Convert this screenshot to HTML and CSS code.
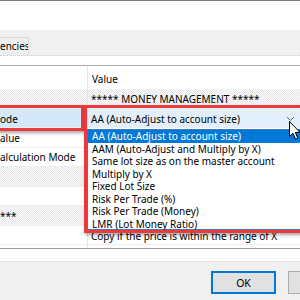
FILE: index.html
```html
<!DOCTYPE html>
<html>
<head>
<meta charset="utf-8">
<link rel="stylesheet" href="styles.css">
</head>
<body>
<div class="dialog">
  <div class="topband"></div>
  <div class="tabstrip"><div class="tab">encies</div></div>
  <div class="gapband"></div>
  <div class="grid">
    <div class="row header"><div class="name"></div><div class="value">Value</div></div>
    <div class="row cat h20"><div class="name"></div><div class="value">***** MONEY MANAGEMENT *****</div></div>
    <div class="row sel h19"><div class="name">ode</div><div class="value combo"><span>AA (Auto-Adjust to account size)</span><svg class="chev" width="9" height="6" viewBox="0 0 9 6"><polyline points="1,1 4.5,4.5 8,1" fill="none" stroke="#6d6d6d" stroke-width="1"/></svg></div></div>
    <div class="row h20"><div class="name">alue</div><div class="value"></div></div>
    <div class="row h19"><div class="name">alculation Mode</div><div class="value"></div></div>
    <div class="row cat h20"><div class="name"></div><div class="value"></div></div>
    <div class="row h19"><div class="name"></div><div class="value"></div></div>
    <div class="row cat h20"><div class="name">***</div><div class="value"></div></div>
    <div class="row h19"><div class="name"></div><div class="value copy">Copy if the price is within the range of X</div></div>
    <div class="row tail"><div class="name"></div><div class="value"></div></div>
  </div>
  <div class="whiteband"></div>
  <div class="footer">
    <div class="btn default">OK</div>
    <div class="btn"></div>
  </div>
</div>

<ul class="droplist">
  <li class="picked">AA (Auto-Adjust to account size)</li>
  <li>AAM (Auto-Adjust and Multiply by X)</li>
  <li>Same lot size as on the master account</li>
  <li>Multiply by X</li>
  <li>Fixed Lot Size</li>
  <li>Risk Per Trade (%)</li>
  <li>Risk Per Trade (Money)</li>
  <li>LMR (Lot Money Ratio)</li>
</ul>

<div class="mark mark-left"></div>
<div class="mark mark-right"></div>

<svg class="cursor" width="13" height="20" viewBox="0 0 13 20">
  <path d="M0.5,0.5 L0.5,15.5 L4,12.2 L6.6,18.2 L8.8,17.2 L6.3,11.4 L11,11.4 Z" fill="#ffffff" stroke="#000000" stroke-width="1" stroke-linejoin="miter"/>
</svg>
</body>
</html>
```

FILE: styles.css
```css
html, body {
  margin: 0;
  padding: 0;
}
body {
  width: 300px;
  height: 300px;
  overflow: hidden;
  position: relative;
  background: #f0f0f0;
  font-family: "Noto Sans", "Open Sans", sans-serif;
  font-size: 10px;
  color: #000;
}
.dialog {
  width: 300px;
  display: flex;
  flex-direction: column;
}
.topband {
  height: 29px;
  border-top: 1px solid #7c7c7c;
  background: #ffffff;
}
.tabstrip {
  height: 25px;
  background: #f0f0f0;
  border-bottom: 1px dotted #cfcfcf;
  display: flex;
  align-items: flex-end;
}
.tab {
  width: 28px;
  height: 17px;
  border-top: 1px solid #d9d9d9;
  border-right: 1px solid #d9d9d9;
  background: #f0f0f0;
  line-height: 17px;
  white-space: nowrap;
  overflow: hidden;
}
.gapband {
  height: 9px;
  background: #ffffff;
}
.grid {
  border-top: 1px solid #a9a9a9;
  border-bottom: 1px solid #a0a0a0;
  background: #ffffff;
  display: flex;
  flex-direction: column;
}
.row {
  display: grid;
  grid-template-columns: 88px 1fr;
  box-sizing: border-box;
  border-bottom: 1px solid #ededed;
  white-space: nowrap;
}
.row .name {
  border-right: 1px solid #e6e6e6;
  overflow: hidden;
  display: flex;
  align-items: center;
  padding-left: 0;
}
.row .value {
  display: flex;
  align-items: center;
  padding-left: 3px;
  overflow: hidden;
}
.header {
  height: 23px;
  border-bottom: none;
}
.header .value {
  padding-left: 4px;
  padding-top: 2px;
}
.h20 { height: 20px; }
.h19 { height: 19px; }
.tail { height: 3px; border-bottom: none; }
.cat .name,
.cat .value {
  background-color: #f3f3f3;
  background-image: repeating-conic-gradient(#e9e9e9 0 25%, #f9f9f9 0 50%);
  background-size: 2px 2px;
}
.sel .name {
  background: #d5e8f9;
  padding-top: 2px;
}
.combo {
  background: #e2eefa;
  justify-content: space-between;
  padding-top: 2px;
}
.copy {
  padding-top: 1px;
}
.chev {
  margin-right: 5px;
  flex-shrink: 0;
}
.whiteband {
  height: 12px;
  background: #ffffff;
  border-bottom: 1px solid #dedede;
}
.footer {
  display: flex;
  gap: 12px;
  padding: 9px 0 0 211px;
}
.btn {
  flex-shrink: 0;
  width: 75px;
  height: 23px;
  box-sizing: border-box;
  border: 1px solid #adadad;
  background: #e1e1e1;
  display: flex;
  align-items: center;
  justify-content: center;
  font-size: 10.5px;
}
.btn.default {
  width: 65px;
  border: 1px solid #0078d7;
  box-shadow: inset 0 0 0 1px #0078d7;
}
.droplist {
  position: absolute;
  left: 87px;
  top: 129px;
  width: 220px;
  height: 101px;
  box-sizing: border-box;
  margin: 0;
  padding: 0;
  list-style: none;
  background: #ffffff;
  border: 1px solid #3d7ab8;
}
.droplist li {
  height: 12.5px;
  line-height: 12.5px;
  padding-left: 4px;
  white-space: nowrap;
}
.droplist li.picked {
  background: #0078d7;
  color: #ffffff;
}
.mark {
  position: absolute;
  box-sizing: border-box;
  border: 3px solid #ea3a3d;
  box-shadow: 1px 2px 3px rgba(0, 0, 0, 0.35);
}
.mark-left {
  left: -4px;
  top: 105px;
  width: 88px;
  height: 26px;
}
.mark-right {
  left: 84px;
  top: 105px;
  width: 222px;
  height: 128px;
}
.cursor {
  position: absolute;
  left: 289px;
  top: 121px;
}
```
